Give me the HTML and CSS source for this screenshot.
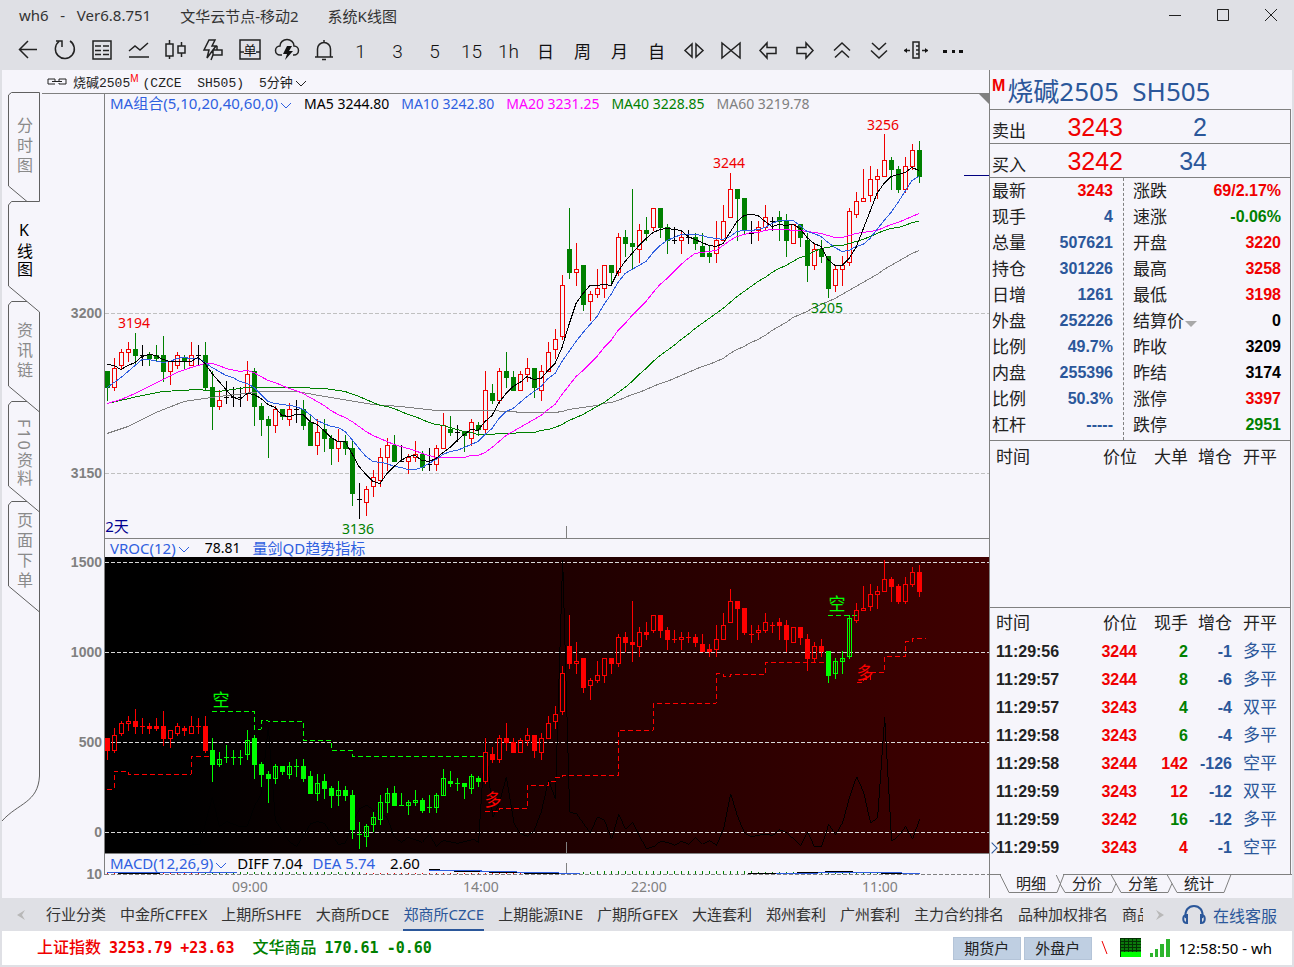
FILE: index.html
```html
<!DOCTYPE html>
<html lang="zh-CN">
<head>
<meta charset="utf-8">
<title>wh6 - 系统K线图</title>
<link rel="stylesheet" href="styles.css">
</head>
<body>
<div class="app">
  <header class="titlebar">
    <span>wh6&nbsp;&nbsp; -&nbsp;&nbsp; Ver6.8.751</span>
    <span>文华云节点-移动2</span>
    <span>系统K线图</span>
    <div class="window-buttons">
      <button aria-label="最小化"><svg viewBox="0 0 14 14"><path d="M1 7.5h12"/></svg></button>
      <button aria-label="最大化"><svg viewBox="0 0 14 14"><path d="M1.5 1.5h11v11h-11z"/></svg></button>
      <button aria-label="关闭"><svg viewBox="0 0 14 14"><path d="M1 1l12 12M13 1L1 13"/></svg></button>
    </div>
  </header>

  <div class="toolbar" role="toolbar">
    <button aria-label="返回"><svg viewBox="0 0 26 26"><path d="M22 12.500H5M13 4l-8.500 8.500L13 21"/></svg></button>
    <button aria-label="刷新"><svg viewBox="0 0 26 26"><path d="M18 4a9.500 9.500 0 1 1-11 .5M4 4h6v6"/></svg></button>
    <button aria-label="报价"><svg viewBox="0 0 26 26"><path d="M4 4h18v18H4zM6 9h6M14 9h6M6 13.500h6M14 13.500h6M6 17.500h6M14 17.500h6"/></svg></button>
    <button aria-label="分时"><svg viewBox="0 0 26 26"><path d="M3 14l6-5 5 4 8-7M3 20h20"/></svg></button>
    <button aria-label="K线"><svg viewBox="0 0 26 26"><path d="M3 7h7v12H3zM6.500 3v4M6.500 19v3M15 9h7v7h-7zM18.500 5v4M18.500 16v4"/></svg></button>
    <button aria-label="闪电手"><svg viewBox="0 0 26 26"><path d="M9 3h6l-3 6h4L7 21l2-8H4zM13 13h9v5h-9zM17 9v4M13 18l-2 5"/></svg></button>
    <button aria-label="下单"><svg viewBox="0 0 26 26"><path d="M3 3h20v19H3zM3 15h4M19 15h4"/><text x="13" y="18">单</text></svg></button>
    <button aria-label="云条件单"><svg viewBox="0 0 26 26"><path d="M8 18H6a4.500 4.500 0 0 1 0-9 7 6.500 0 0 1 14 0 4.500 4.500 0 0 1 0 9h-1"/><path class="solid" d="M13 9h5l-3 5h4l-8 9 2-6H9z"/></svg></button>
    <button aria-label="预警"><svg viewBox="0 0 26 26"><path d="M4 20h18M6.500 20v-8a6.500 6.500 0 0 1 13 0v8M11 22.500h4M13 3v2"/></svg></button>
    <button class="num">1</button><button class="num">3</button><button class="num">5</button><button class="num">15</button><button class="num">1h</button>
    <button>日</button><button>周</button><button>月</button><button>自</button>
    <button aria-label="放宽"><svg viewBox="0 0 26 26"><path d="M11 7v13l-7-6.500zM15 7v13l7-6.500z"/></svg></button>
    <button aria-label="收窄"><svg viewBox="0 0 26 26"><path d="M4 6v15l9-7.500zM22 6v15l-9-7.500z"/></svg></button>
    <button aria-label="左移"><svg viewBox="0 0 26 26"><path d="M5 13.500l7-7.500v4.500h9v6h-9V21z"/></svg></button>
    <button aria-label="右移"><svg viewBox="0 0 26 26"><path d="M21 13.500L14 6v4.500H5v6h9V21z"/></svg></button>
    <button aria-label="放大"><svg viewBox="0 0 26 26"><path d="M5 13.500L13 6l8 7.500M6 20.500l7-6.500 7 6.500"/></svg></button>
    <button aria-label="缩小"><svg viewBox="0 0 26 26"><path d="M6 6l7 6.500L20 6M5 13.500l8 7.500 8-7.500"/></svg></button>
    <button aria-label="标尺"><svg viewBox="0 0 26 26"><path d="M10 5h6v16h-6zM16 9h-3M16 13h-3M16 17h-3M1 13.500h6M19 13.500h6"/><path class="solid" d="M4 11v5l-3-2.500zM22 11v5l3-2.500z"/></svg></button>
    <button aria-label="更多"><svg viewBox="0 0 26 26"><path class="solid" d="M3 13h4v3H3zM12 13h3v3h-3zM19 13h4v3h-4z"/></svg></button>
  </div>

  <main class="workspace">
    <nav class="side">
      <svg class="side-lines" viewBox="2 70 40 828" preserveAspectRatio="xMinYMin">
        <path d="M8.500 186V95l3-2.500h28v109H27L8.500 186M8.500 286v-81l3-3.500H27M8.500 286l31 26v464M8.500 386v-81l3-3.500H27M8.500 386l31 26M8.500 486v-81l3-3.500H27M8.500 486l31 26M8.500 586v-81l3-3.500H27M8.500 586l31 26"/>
        <path class="curve" d="M39.500 776C38 803 18 803 2 821"/>
      </svg>
      <button>分时图</button>
      <button class="active">K线图</button>
      <button>资讯链</button>
      <button class="mixed">F10资料</button>
      <button class="long">页面下单</button>
    </nav>

    <section class="charts">
      <div class="symbol-row">
        <svg class="link" viewBox="0 0 20 10"><path d="M8 7H1V2h7v2M12 4V2h7v5h-7V6M5 4.500h10"/></svg>
        <span>烧碱2505<sup>M</sup>(CZCE&nbsp; SH505)</span>
        <button>5分钟<svg class="chev" viewBox="0 0 12 8"><path d="M1 1l5 5 5-5"/></svg></button>
      </div>
      <div class="legend top">
        <button class="blue">MA组合(5,10,20,40,60,0)<svg class="chev" viewBox="0 0 12 8"><path d="M1 1l5 5 5-5"/></svg></button>
        <span class="black">MA5 3244.80</span>
        <span class="blue">MA10 3242.80</span>
        <span class="magenta">MA20 3231.25</span>
        <span class="green">MA40 3228.85</span>
        <span class="gray">MA60 3219.78</span>
        <i class="corner"></i>
      </div>
      <svg class="plot price" viewBox="42 113 947 425" preserveAspectRatio="xMinYMin">
        <path class="axis" d="M104.500 113v425"/>
        <path class="grid" d="M105 313.500h884M105 473.500h884"/>
        <g id="price"></g>
        <path class="last" d="M964 175.500h25"/>
        <path class="axis" d="M566.500 526v12"/>
        <text class="scale" x="102" y="318">3200</text>
        <text class="scale" x="102" y="478">3150</text>
        <g class="marks">
          <text class="red" x="134" y="328">3194</text>
          <text class="green" x="358" y="534">3136</text>
          <text class="red" x="729" y="168">3244</text>
          <text class="red" x="883" y="130">3256</text>
          <text class="green" x="827" y="313">3205</text>
          <text class="navy" x="117" y="532">2天</text>
        </g>
      </svg>
      <div class="legend mid">
        <button class="blue">VROC(12)<svg class="chev" viewBox="0 0 12 8"><path d="M1 1l5 5 5-5"/></svg></button>
        <span class="black">78.81</span>
        <span class="blue name">量剑QD趋势指标</span>
      </div>
      <svg class="plot trend" viewBox="42 557 947 297" preserveAspectRatio="xMinYMin">
        <defs><linearGradient id="night"><stop offset="0.080" stop-color="#000"/><stop offset="1" stop-color="#400000"/></linearGradient></defs>
        <rect x="105" y="557" width="2000" height="296" fill="#400000"/>
        <rect x="105" y="557" width="884" height="296" fill="url(#night)"/>
        <path class="grid white" d="M105 562.500h884M105 652.500h884M105 742.500h884M105 832.500h884"/>
        <g class="traced" transform="translate(100 540) scale(.33333)">
          <path class="vroc" d="M240 920L300 912 337 770 358 860 380 845 420 860 442 858 463 800 484 760 505 560 526 840 568 905 590 920 631 852 652 845 673 850 715 913 736 910 757 850 780 805 800 795 820 810 860 830 883 890 904 907 925 892 967 907 988 883 1009 919 1030 901 1072 910 1120 898 1136 907 1140 838"/>
          <path class="step red" d="M22 748H43V694H85V703H274V649H337"/>
          <path class="step lime" d="M337 514H463V568H484V542H505V544H610V601H694V631H757V649H1156"/>
        </g>
        <g class="traced" transform="translate(480 540) scale(.33333)">
          <path class="vroc" d="M0 838L16 590 38 832 58 790 79 710 102 850 120 880 143 889 162 873 184 815 206 720 226 777 248 60 269 817 290 821 310 850 331 878 353 830 373 840 395 898 416 823 437 868 458 848 479 890 500 926 521 920 542 904 563 907 584 916 605 904 626 913 647 892 668 913 689 902 710 916 731 865 752 761 773 830 794 880 815 890 857 882 878 887 899 869 920 878 962 916 983 877 1003 919 1025 919 1046 853 1067 884 1088 848 1109 770 1130 710 1151 757 1172 850 1193 832 1214 532 1235 904 1256 887 1277 859 1298 898 1319 836"/>
          <path class="step red" d="M15 814H58V805H143V736H206V724H227V712H248V706H416V571H520V490H709V401H730V409H752V403H856V367H1045M1130 427H1151V418H1172V397H1214V349H1277V304H1298V295H1338"/>
          <path class="step lime" d="M1045 226H1130"/>
        </g>
        <g id="trend"></g>
        <path class="axis" d="M104.500 557v297M104 853.500h885M566.500 842v11"/>
        <g class="signals">
          <text class="lime" x="221" y="706">空</text><text class="red" x="493" y="806">多</text>
          <text class="lime" x="837" y="610">空</text><text class="red" x="865" y="679">多</text>
        </g>
        <text class="scale" x="102" y="567">1500</text>
        <text class="scale" x="102" y="657">1000</text>
        <text class="scale" x="102" y="747">500</text>
        <text class="scale" x="102" y="837">0</text>
      </svg>
      <div class="macd">
        <svg class="plot strip" viewBox="42 854 947 44" preserveAspectRatio="xMinYMin">
          <path class="axis" d="M104.500 854v21M566.500 863v11"/>
          <path class="grid dark" d="M105 874.500h884"/>
          <g id="macd"></g>
          <path class="seg black" d="M118 873.500h42M429 869.500h11M454 871.500h28M489 872.500h28M524 873.500h35M748 873.500h29M797 872.500h21M825 871.500h28M881 873.500h21"/>
          <path class="seg blue" d="M107 872.500h130M429 870.500h53M480 871.500h37M517 872.500h42M559 873.500h21M776 873.500h42M818 872.500h84M902 873.500h18"/>
          <text class="scale" x="102" y="879">10</text>
          <text class="time" x="250" y="892">09:00</text>
          <text class="time" x="481" y="892">14:00</text>
          <text class="time" x="649" y="892">22:00</text>
          <text class="time" x="880" y="892">11:00</text>
        </svg>
        <div class="legend low">
          <button class="blue">MACD(12,26,9)<svg class="chev" viewBox="0 0 12 8"><path d="M1 1l5 5 5-5"/></svg></button>
          <span class="black">DIFF 7.04</span>
          <span class="blue">DEA 5.74</span>
          <span class="black wide">2.60</span>
        </div>
      </div>
    </section>

    <aside class="quote">
      <h1><sup>M</sup>烧碱2505&nbsp; SH505</h1>
      <div class="framed">
        <div class="depth"><span>卖出</span><b>3243</b><i>2</i></div>
        <div class="depth"><span>买入</span><b>3242</b><i>34</i></div>
        <div class="stats">
          <dl>
            <div><dt>最新</dt><dd class="red">3243</dd></div>
            <div><dt>现手</dt><dd>4</dd></div>
            <div><dt>总量</dt><dd>507621</dd></div>
            <div><dt>持仓</dt><dd>301226</dd></div>
            <div><dt>日增</dt><dd>1261</dd></div>
            <div><dt>外盘</dt><dd>252226</dd></div>
            <div><dt>比例</dt><dd>49.7%</dd></div>
            <div><dt>内盘</dt><dd>255396</dd></div>
            <div><dt>比例</dt><dd>50.3%</dd></div>
            <div><dt>杠杆</dt><dd>-----</dd></div>
          </dl>
          <dl>
            <div><dt>涨跌</dt><dd class="red">69/2.17%</dd></div>
            <div><dt>速涨</dt><dd class="green">-0.06%</dd></div>
            <div><dt>开盘</dt><dd class="red">3220</dd></div>
            <div><dt>最高</dt><dd class="red">3258</dd></div>
            <div><dt>最低</dt><dd class="red">3198</dd></div>
            <div><dt class="drop">结算价</dt><dd class="black">0</dd></div>
            <div><dt>昨收</dt><dd class="black">3209</dd></div>
            <div><dt>昨结</dt><dd class="black">3174</dd></div>
            <div><dt>涨停</dt><dd class="red">3397</dd></div>
            <div><dt>跌停</dt><dd class="green">2951</dd></div>
          </dl>
        </div>
        <div class="orders">
          <table>
            <thead><tr><th>时间</th><th>价位</th><th>大单</th><th>增仓</th><th>开平</th></tr></thead>
          </table>
        </div>
        <div class="trades">
          <table>
            <thead><tr><th>时间</th><th>价位</th><th>现手</th><th>增仓</th><th>开平</th></tr></thead>
            <tbody>
              <tr><td>11:29:56</td><td>3244</td><td class="green">2</td><td>-1</td><td>多平</td></tr>
              <tr><td>11:29:57</td><td>3244</td><td class="green">8</td><td>-6</td><td>多平</td></tr>
              <tr><td>11:29:57</td><td>3243</td><td class="green">4</td><td>-4</td><td>双平</td></tr>
              <tr><td>11:29:58</td><td>3243</td><td class="green">6</td><td>-4</td><td>多平</td></tr>
              <tr><td>11:29:58</td><td>3244</td><td class="red">142</td><td>-126</td><td>空平</td></tr>
              <tr><td>11:29:59</td><td>3243</td><td class="red">12</td><td>-12</td><td>双平</td></tr>
              <tr><td>11:29:59</td><td>3242</td><td class="green">16</td><td>-12</td><td>多平</td></tr>
              <tr class="newest"><td>11:29:59</td><td>3243</td><td class="red">4</td><td>-1</td><td>空平</td></tr>
            </tbody>
          </table>
        </div>
      </div>
      <div class="sheet-tabs">
        <svg viewBox="0 0 302 22" preserveAspectRatio="xMinYMin"><path d="M0 .5h10l9 18h48l7-18h228M70 10l5 8.500h47l4-9M121 .5l10 18h47l4-9M177 .5l10 18h47l7-18M70 9l-4-8.500"/><path class="gap" d="M11 .5h62"/></svg>
        <button>明细</button><button>分价</button><button>分笔</button><button>统计</button>
      </div>
    </aside>
  </main>

  <nav class="markets">
    <button class="arrow" aria-label="向左"><svg viewBox="0 0 10 12"><path d="M9 1L1 6l8 5-3-5z"/></svg></button>
    <div class="market-list">
      <button>行业分类</button><button>中金所CFFEX</button><button>上期所SHFE</button><button>大商所DCE</button><button class="active">郑商所CZCE</button><button>上期能源INE</button><button>广期所GFEX</button><button>大连套利</button><button>郑州套利</button><button>广州套利</button><button>主力合约排名</button><button>品种加权排名</button><button>商品</button>
    </div>
    <button class="arrow next" aria-label="向右"><svg viewBox="0 0 10 12"><path d="M1 1l8 5-8 5 3-5z"/></svg></button>
    <a class="service" href="#service"><svg viewBox="0 0 26 22"><path d="M5 14C3 6 8 2 13 2s10 4 8 12"/><path d="M6 11c-5 0-5 8 0 8zM20 11c5 0 5 8 0 8z"/></svg>在线客服</a>
  </nav>

  <footer class="status">
    <div class="index red"><span>上证指数</span><b>3253.79</b><b>+23.63</b></div>
    <div class="index green"><span>文华商品</span><b>170.61</b><b>-0.60</b></div>
    <div class="status-end">
      <button>期货户</button><button>外盘户</button>
      <svg class="slash" viewBox="0 0 8 16"><path d="M1 1l5 13"/></svg>
      <svg class="monitor" viewBox="0 0 22 20"><path fill="#0b7a0b" d="M0 0h21v15H0z"/><path fill="#0f0" d="M1 14h20v5H1z"/><path stroke="#043004" d="M0 .5h21M1 3.500h20M1 6.500h20M1 9.500h20M1 12.500h20M.5 0v19M4.500 1v13M8.500 1v13M12.500 1v13M16.500 1v13"/></svg>
      <svg class="signal" viewBox="0 0 20 20"><path fill="#2db52d" d="M0 15h3v4H0zM5 11h3v8H5zM10 6h4v13h-4zM16 1h4v18h-4z"/></svg>
      <span class="clock">12:58:50 - wh</span>
    </div>
  </footer>
</div>
<script src="chart.js"></script>
</body>
</html>
```
FILE: styles.css
```css
* { box-sizing: border-box; }
body {
  margin: 0;
  background: #dfe0e5;
  color: #222;
  font-family: "Noto Sans", "Noto Sans CJK SC", sans-serif;
  font-size: 14px;
}
button {
  margin: 0;
  padding: 0;
  border: 0;
  background: none;
  color: inherit;
  font: inherit;
}
svg { display: block; fill: none; }
.red { color: #f00000; fill: #f00000; }
.green { color: #008000; fill: #008000; }
.blue { color: #2f5fe0; fill: #2f5fe0; }
.black { color: #000; fill: #000; }
.magenta { color: #f0f; }
.gray { color: #808080; }
.navy { fill: #000090; }
.lime { fill: #0f0; }

.app { min-height: 100vh; display: flex; flex-direction: column; padding: 0 2px 2px; }

.titlebar { display: flex; align-items: center; gap: 29px; height: 30px; padding: 0 14px 0 17px; color: #333; font-size: 15px; }
.window-buttons { display: flex; gap: 34px; margin-left: auto; }
.window-buttons svg { width: 14px; height: 14px; stroke: #222; }

.toolbar { display: flex; height: 40px; padding-left: 7px; color: #111; }
.toolbar button { display: flex; align-items: center; justify-content: center; width: 37px; height: 40px; font-size: 17px; }
.toolbar .num { font-family: Roboto, sans-serif; font-size: 19px; font-weight: 300; padding-top: 2px; }
.toolbar svg { width: 26px; height: 26px; stroke: #222; stroke-width: 1.500; }
.toolbar svg text { font-size: 13px; text-anchor: middle; fill: #111; stroke: none; }
.toolbar .solid { fill: #111; stroke: none; }

.workspace { flex: 1; display: flex; background: #f6f5fb; }

.side { position: relative; width: 40px; flex: none; padding-top: 31px; color: #8a8a8a; }
.side button { display: flex; justify-content: flex-start; align-items: center; width: 36px; height: 100px; padding: 21px 0 0 8px; writing-mode: vertical-rl; text-orientation: upright; font-size: 16px; line-height: 28px; letter-spacing: 4px; }
.side button:first-of-type { padding-top: 16px; }
.side button.active { color: #000; padding-top: 18px; letter-spacing: 2px; }
.side button.mixed { padding-top: 18px; text-orientation: mixed; letter-spacing: 2px; }
.side button.long { padding-top: 11px; }
.side-lines { position: absolute; left: 0; top: 0; width: 40px; height: 828px; stroke: #606060; }

.charts { flex: 1; min-width: 0; display: flex; flex-direction: column; }
.symbol-row { display: flex; align-items: center; height: 24px; padding-left: 5px; border-bottom: 1px solid #808080; font-family: "Liberation Mono", "Noto Sans CJK SC", monospace; font-size: 13px; }
.symbol-row .link { width: 20px; height: 10px; margin-right: 6px; stroke: #222; }
.symbol-row sup { margin-right: 4px; color: #f00; font: 10px "Liberation Sans", sans-serif; vertical-align: 5px; line-height: 0; }
.symbol-row button { margin-left: 15px; }
.symbol-row button, .legend button { display: flex; align-items: center; gap: 2px; }
.chev { width: 12px; height: 8px; margin-top: 4px; stroke: currentColor; }

.legend { position: relative; display: flex; align-items: center; height: 19px; margin-left: 62px; padding-left: 5px; gap: 12px; border-left: 1px solid #808080; white-space: nowrap; line-height: 18px; }
.legend button, .legend .name { font-size: 15px; line-height: 17px; }
.legend.mid { border-top: 1px solid #808080; line-height: 16px; }
.legend.mid button, .legend.mid .name { line-height: 16px; }
.legend.mid button { margin-right: 3px; }
.legend.low { gap: 10px; font-size: 15px; line-height: 17px; }
.legend .wide { margin-left: 5px; }
.corner { position: absolute; right: 0; top: 0; border: 5px solid transparent; border-top-color: #808080; border-right-color: #808080; }

.plot { width: 100%; shape-rendering: crispEdges; flex: none; }
.price { height: 425px; }
.trend { height: 297px; }
.macd { position: relative; height: 44px; }
.macd .strip { position: absolute; left: 0; top: 0; height: 44px; }
.axis { stroke: #808080; }
.grid { stroke: #c0c0c0; stroke-dasharray: 4 2; }
.grid.white { stroke: #d8d8d8; }
.grid.dark { stroke: #808080; }
.last { stroke: #000080; }
.scale { font: bold 14px "Liberation Sans", sans-serif; fill: #808080; text-anchor: end; }
.time { font-size: 14px; fill: #808080; text-anchor: middle; }
.marks text { font-size: 14px; text-anchor: middle; }
.marks .navy { font-size: 15px; }
.signals text { font-size: 17px; text-anchor: middle; }
.signals .red { fill: #f00; }
.traced path { fill: none; stroke-width: 3; }
.vroc { stroke: #000; }
.step { stroke-dasharray: 15 9; }
.step.red { stroke: #f00; }
.step.lime { stroke: #0f0; }
.seg { fill: none; }
.seg.black { stroke: #000; }
.seg.blue { stroke: #2f5fe0; }

.quote { width: 303px; flex: none; padding-right: 1px; border-left: 1px solid #808080; color: #2b579a; font-kerning: none; }
.quote h1 { height: 39px; margin: 0; padding-left: 2px; font-size: 26px; font-weight: 400; line-height: 42px; white-space: nowrap; }
.quote h1 sup { margin-right: 2px; color: #f00000; font: bold 16px "Liberation Sans", sans-serif; vertical-align: 10px; line-height: 0; }
.framed { border: 1px solid #808080; border-left: 0; }
.depth { display: grid; grid-template-columns: 58px 73px 84px; align-items: center; height: 34px; padding: 2px 0 0 2px; border-bottom: 1px solid #808080; font-family: "Liberation Sans", "Noto Sans CJK SC", sans-serif; text-align: right; }
.depth span { color: #222; font-size: 17px; text-align: left; padding-top: 4px; }
.depth b { color: #f00000; font-size: 25px; font-weight: 400; }
.depth i { font-size: 25px; font-style: normal; }
.stats { display: grid; grid-template-columns: 133px 1fr; height: 263px; border-bottom: 1px solid #808080; }
.stats dl { margin: 0; padding: 0 10px 0 2px; }
.stats dl + dl { padding: 0 9px; border-left: 1px dashed #808080; }
.stats dl div { display: flex; justify-content: space-between; align-items: center; height: 26px; }
.stats dt { color: #222; font-size: 17px; line-height: 26px; }
.stats dd { margin: 0; font: bold 16px "Liberation Sans", sans-serif; }
.drop::after { content: ""; display: inline-block; margin-left: 1px; border: 6px solid transparent; border-top-color: #a8a8a8; border-bottom: 0; }
.orders { height: 167px; border-bottom: 1px solid #808080; padding-top: 2px; }
.trades { height: 266px; padding-top: 1px; }
table { width: 100%; table-layout: fixed; border-collapse: collapse; font: bold 16px "Liberation Sans", "Noto Sans CJK SC", sans-serif; }
th, td { height: 28px; padding: 0; text-align: right; white-space: nowrap; line-height: 24px; }
thead th { height: 29px; padding-top: 1px; }
th { color: #222; font-size: 17px; font-weight: 400; }
th:nth-child(1) { width: 75px; }
th:nth-child(2) { width: 72px; }
th:nth-child(3) { width: 51px; }
th:nth-child(4) { width: 44px; }
th:nth-child(1), td:nth-child(1) { padding-left: 6px; text-align: left; }
td:nth-child(1) { position: relative; color: #222; }
td:nth-child(2) { color: #f00000; }
th:nth-child(5), td:nth-child(5) { padding-left: 11px; font-size: 17px; font-weight: 400; text-align: left; }
.newest td:first-child::before { content: ""; position: absolute; left: -2px; top: 10px; width: 7px; height: 7px; border: solid #2b579a; border-width: 1px 1px 0 0; transform: rotate(45deg); }
.sheet-tabs { position: relative; display: flex; height: 23px; margin-top: -1px; padding-left: 16px; color: #222; font-size: 15px; }
.sheet-tabs svg { position: absolute; left: 0; top: 0; width: 302px; height: 22px; stroke: #808080; }
.sheet-tabs .gap { stroke: #f6f5fb; }
.sheet-tabs button { position: relative; width: 56px; height: 18px; padding-left: 10px; text-align: left; line-height: 16px; }

.markets { display: flex; align-items: center; height: 33px; padding: 0 15px 0 14px; font-size: 15px; color: #333; }
.market-list { flex: 1; min-width: 0; display: flex; gap: 14px; height: 33px; margin-left: 20px; overflow: hidden; white-space: nowrap; }
.market-list button { flex: none; border-bottom: 2px solid transparent; line-height: 28px; }
.market-list .active { color: #2b579a; border-bottom-color: #2b579a; }
.arrow svg { width: 10px; height: 12px; fill: #b8b8b8; }
.arrow.next { margin-left: 12px; }
.service { display: flex; align-items: center; gap: 6px; margin-left: 16px; color: #2b579a; font-size: 16px; text-decoration: none; }
.service svg { width: 26px; height: 22px; stroke: #2b579a; stroke-width: 2; }

.status { display: flex; align-items: center; height: 34px; padding: 0 20px 0 35px; background: #fff; }
.index { display: flex; align-items: center; gap: 8px; margin-right: 18px; font: bold 15px "DejaVu Sans Mono", "Noto Sans CJK SC", monospace; line-height: 20px; }
.index span { font-weight: 500; font-size: 16px; }
.status-end { display: flex; align-items: center; gap: 3px; margin-left: auto; color: #000; }
.status-end button { width: 68px; height: 23px; border: 1px solid #b4c4d8; background: #bfcfe2; color: #222; font-size: 15px; line-height: 20px; }
.clock { font-size: 15px; }
.slash { width: 8px; height: 16px; margin: 0 8px 0 6px; stroke: #f00000; }
.monitor { width: 22px; height: 20px; margin-right: 5px; }
.signal { width: 20px; height: 20px; margin-right: 6px; }
```
FILE: chart.js
```js
// One bar per row: open, close, high, low.
const bars = [
  [3182,3177,3182,3173],[3177,3183,3186,3176],[3184,3188,3189,3183],[3188,3189,3191,3185],[3189,3187,3194,3184],
  [3187,3187,3190,3184],[3187,3186,3188,3184],[3187,3186,3190,3185],[3187,3182,3193,3179],[3182,3185,3185,3178],
  [3184,3187,3188,3183],[3186,3185,3187,3183],[3184,3187,3191,3184],[3187,3187,3190,3184],[3187,3177,3191,3176],
  [3177,3171,3182,3164],[3171,3173,3176,3170],[3174,3174,3179,3172],[3174,3174,3177,3171],[3174,3174,3177,3171],
  [3175,3181,3185,3173],[3182,3171,3183,3165],[3171,3167,3172,3162],[3167,3165,3168,3155],[3165,3170,3171,3163],
  [3170,3168,3170,3167],[3167,3170,3172,3165],[3170,3170,3173,3166],[3170,3165,3173,3164],[3166,3159,3168,3159],
  [3159,3163,3167,3156],[3164,3161,3167,3157],[3161,3158,3162,3153],[3158,3160,3164,3154],[3160,3158,3162,3156],
  [3158,3144,3160,3140],[3142,3142,3147,3136],[3141,3145,3146,3137],[3146,3149,3151,3143],[3148,3155,3158,3146],
  [3155,3159,3161,3151],[3159,3154,3162,3154],[3154,3154,3159,3154],[3154,3155,3156,3150],[3155,3156,3160,3154],
  [3156,3152,3157,3151],[3153,3153,3158,3151],[3153,3158,3159,3151],[3158,3165,3169,3158],[3164,3163,3168,3162],
  [3163,3163,3165,3160],[3163,3162,3163,3157],[3161,3166,3167,3159],[3165,3164,3166,3162],[3164,3176,3182,3163],
  [3175,3173,3178,3172],[3173,3182,3183,3172],[3182,3180,3188,3177],[3180,3176,3182,3176],[3176,3181,3182,3176],
  [3181,3183,3186,3179],[3183,3177,3183,3174],[3176,3182,3184,3173],[3182,3188,3191,3182],[3189,3192,3195,3186],
  [3193,3209,3212,3192],[3220,3213,3233,3211],[3213,3214,3222,3209],[3215,3203,3215,3201],[3204,3206,3207,3198],
  [3206,3208,3214,3205],[3208,3215,3215,3205],[3215,3213,3215,3209],[3213,3224,3225,3212],[3224,3222,3226,3218],
  [3222,3221,3239,3214],[3220,3226,3228,3216],[3226,3225,3230,3223],[3227,3233,3233,3226],[3233,3227,3233,3224],
  [3227,3223,3228,3219],[3223,3223,3227,3222],[3223,3224,3226,3219],[3224,3224,3226,3222],[3224,3222,3225,3220],
  [3221,3218,3225,3218],[3219,3218,3221,3216],[3219,3223,3229,3216],[3223,3229,3234,3223],[3230,3239,3244,3230],
  [3239,3236,3239,3223],[3236,3226,3236,3225],[3225,3225,3229,3222],[3226,3227,3229,3223],[3227,3230,3234,3226],
  [3229,3229,3230,3226],[3230,3229,3232,3223],[3229,3223,3231,3218],[3222,3228,3228,3222],[3228,3224,3228,3221],
  [3223,3215,3225,3210],[3215,3220,3222,3214],[3220,3218,3223,3216],[3218,3208,3218,3205],[3209,3214,3215,3207],
  [3214,3215,3218,3209],[3216,3232,3233,3215],[3231,3235,3238,3230],[3235,3236,3245,3235],[3237,3242,3246,3235],
  [3242,3243,3245,3236],[3243,3248,3256,3243],[3248,3245,3249,3239],[3245,3239,3246,3238],[3239,3246,3249,3238],
  [3246,3251,3253,3245],[3251,3243,3254,3241]
];

// Averages whose window reaches back before the first bar start from these [bar, value] points.
const averages = [
  { n: 60, color: '#808080', lead: [[0,3162.7],[3,3164.8],[7,3169.3],[11,3172.7],[16,3174.2],[22,3175.6],[27,3175.6],[32,3174],[38,3171.7],[42,3170.9],[47,3169.8],[54,3169.7],[58,3169.5]] },
  { n: 40, color: '#008000', lead: [[0,3171.9],[5,3174.6],[8,3175.6],[13,3176.2],[16,3175.8],[20,3176.9],[27,3177.1],[31,3176.6],[34,3175.8],[36,3174.2],[38,3172.2]] },
  { n: 20, color: '#ff00ff', lead: [[0,3171.9],[2,3173.3],[4,3175],[6,3177.3],[8,3179.5],[10,3181.7],[12,3183.3],[14,3184.4],[15,3184.4],[16,3183.9],[17,3182.8]] },
  { n: 10, color: '#2f5fe0', lead: [[0,3176.9],[2,3180],[5,3185.6],[6,3185.6],[8,3184.7]] },
  { n: 5, color: '#000000', lead: [[0,3184.1],[1,3183.9],[2,3182.7],[3,3183.8]] }
];

const x = i => 107 + i * 7;
const priceY = p => Math.round(313.3 + (3200 - p) * 3.2);
const trendY = p => Math.round(560 + (3256 - p) * 2.4);

function candle(i, y, color, through) {
  const [open, close, high, low] = bars[i];
  const cx = x(i) + 0.5;
  const top = y(Math.max(open, close));
  const bottom = y(Math.min(open, close));
  if (open === close) {
    return `<path stroke="${color}" d="M${cx} ${y(high)}V${y(low) + 1}M${x(i) - 2} ${top + 0.5}h5"/>`;
  }
  if (close < open) {
    return `<path stroke="${color}" d="M${cx} ${y(high)}V${y(low) + 1}"/>` +
      `<rect x="${x(i) - 2}" y="${top}" width="5" height="${bottom - top + 1}" fill="${color}"/>`;
  }
  const wick = through ? `M${cx} ${y(high)}V${y(low) + 1}` : `M${cx} ${y(high)}V${top}M${cx} ${bottom}V${y(low) + 1}`;
  return `<path stroke="${color}" d="${wick}M${x(i) - 1.5} ${top + 0.5}h4V${bottom + 0.5}h-4z"/>`;
}

let price = '';
let trend = '';
bars.forEach(([open, close], i) => {
  price += candle(i, priceY, open === close ? '#000' : close > open ? '#f00000' : '#008000', false);
  const short = (i >= 15 && i <= 53) || (i >= 103 && i <= 106);
  trend += candle(i, trendY, short ? '#00ff00' : '#ff0000', short);
});
averages.forEach(({ n, color, lead }) => {
  const points = lead.map(([i, v]) => `${x(i)},${priceY(v) + 0.5}`);
  for (let i = n - 1; i < bars.length; i++) {
    const sum = bars.slice(i - n + 1, i + 1).reduce((t, b) => t + b[1], 0);
    points.push(`${x(i)},${priceY(sum / n) + 0.5}`);
  }
  price += `<polyline stroke="${color}" points="${points.join(' ')}"/>`;
});
document.getElementById('price').innerHTML = price;
document.getElementById('trend').innerHTML = trend;

let macd = '';
for (let i = 0; i < bars.length; i++) {
  const green = (i >= 14 && i <= 36) || (i >= 68 && i <= 110);
  const height = i >= 70 && i <= 92 ? 3 : green ? 2 : 1;
  macd += `<path stroke="${green ? '#008000' : '#f00000'}" d="M${x(i) + 0.5} 874v-${height}"/>`;
}
document.getElementById('macd').innerHTML = macd;
```
